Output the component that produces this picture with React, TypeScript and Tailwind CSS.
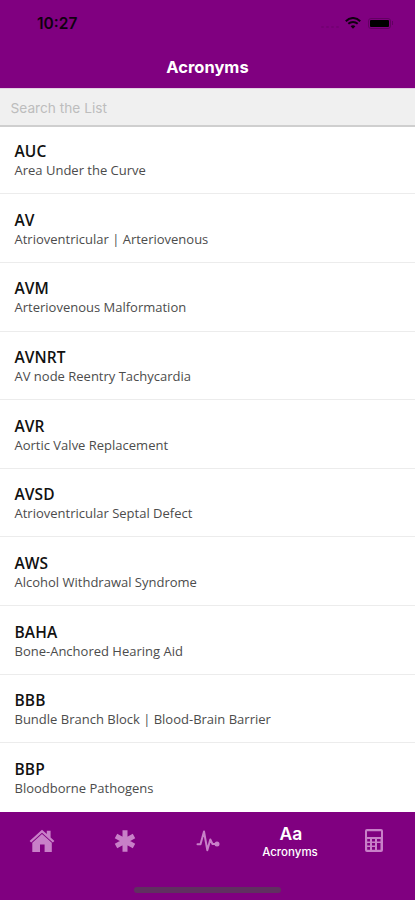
const rows = [
  ['AUC', 'Area Under the Curve'],
  ['AV', 'Atrioventricular | Arteriovenous'],
  ['AVM', 'Arteriovenous Malformation'],
  ['AVNRT', 'AV node Reentry Tachycardia'],
  ['AVR', 'Aortic Valve Replacement'],
  ['AVSD', 'Atrioventricular Septal Defect'],
  ['AWS', 'Alcohol Withdrawal Syndrome'],
  ['BAHA', 'Bone-Anchored Hearing Aid'],
  ['BBB', 'Bundle Branch Block | Blood-Brain Barrier'],
  ['BBP', 'Bloodborne Pathogens'],
];

function StatusBar() {
  return (
    <div className="flex h-[46px] items-center justify-between pr-[22px] pl-[37px] text-[#100010]">
      <span className="pt-[2px] font-['Inter',sans-serif] text-[15.500px] leading-none font-semibold tracking-[0px]">10:27</span>
      <div className="flex items-center">
        <div className="mt-[8px] mr-[6px] flex gap-[2px]">
          {[0, 1, 2, 3].map((i) => (
            <span key={i} className="h-[2px] w-[3px] rounded-full bg-[#740074]" />
          ))}
        </div>
        <svg className="h-[12px] w-[16px]" viewBox="0 0 16 12" fill="none" stroke="currentColor" strokeWidth="2">
          <path d="M.8 4.2C5-.1 11-.1 15.200 4.200M3.300 6.800C6 4.300 10 4.300 12.700 6.800" />
          <path d="M5.600 9.200C7 7.900 9 7.900 10.400 9.200L8 11.700Z" fill="currentColor" stroke="none" />
        </svg>
        <div className="ml-[7px] flex h-[11px] w-[23px] items-center rounded-[3px] border border-[#620062] p-px">
          <span className="h-[7px] w-full rounded-[1px] bg-black" />
        </div>
        <span className="ml-px h-[4px] w-px bg-[#620062]" />
      </div>
    </div>
  );
}

function HomeIcon() {
  return (
    <svg className="h-[24px] w-[26px]" viewBox="0 0 26 24" fill="currentColor">
      <path d="M13 .8 17.800 5V1.700H21.600V8.400L25.400 12 23.800 13.500 13 3.800 2.200 13.500.600 12Z" />
      <path d="M13 5.100 22.800 13.800V22.900H15.600V15.500H11V22.900H3.300V13.800Z" />
    </svg>
  );
}

function AsteriskIcon() {
  return (
    <svg className="h-[22px] w-[22px]" viewBox="0 0 22 22" stroke="currentColor" strokeWidth="5" strokeLinejoin="round">
      <path d="M11 .3V21.700M2 6 20 16M2 16 20 6" />
    </svg>
  );
}

function PulseIcon() {
  return (
    <svg className="h-[22px] w-[24px]" viewBox="0 0 24 22" fill="none" stroke="currentColor" strokeWidth="2" strokeLinecap="round" strokeLinejoin="round">
      <path d="M1.500 14.300H4.500L8 1.500 11.300 20.200 14.300 9.500 16.500 14H20" />
      <circle cx="21" cy="14" r="2.500" fill="currentColor" stroke="none" />
    </svg>
  );
}

function CalculatorIcon() {
  return (
    <svg className="h-[23px] w-[18px]" viewBox="0 0 18 23" fill="currentColor" fillRule="evenodd">
      <path d="M2 0H16Q18 0 18 2V21Q18 23 16 23H2Q0 23 0 21V2Q0 0 2 0ZM2 2.300V8H16V2.300ZM2.200 10V12.500H5V10ZM7 10V12.500H10V10ZM12 10V12.500H15.500V10ZM2.200 14V16.500H5V14ZM7 14V16.500H10V14ZM12 14V20.800H15.500V14ZM2.200 18V20.800H5V18ZM7 18V20.800H10V18Z" />
    </svg>
  );
}

export default function App() {
  return (
    <div className="flex h-[900px] w-[415px] flex-col overflow-hidden bg-white">
      <header className="h-[88px] shrink-0 bg-[#800080]">
        <StatusBar />
        <h1 className="text-center font-['Inter',sans-serif] text-[16.500px] leading-[42px] font-bold tracking-[0px] text-white">Acronyms</h1>
      </header>
      <div className="flex h-[39px] shrink-0 items-center border-t border-b-2 border-t-[#e4cfe4] border-b-[#cfcfcf] bg-[#f0f0f0] px-[10.500px]">
        <input
          className="w-full bg-transparent pt-px font-['Inter',sans-serif] text-[13.700px] leading-[20px] outline-none placeholder:text-[#bdbdbd]"
          placeholder="Search the List"
        />
      </div>
      <main className="h-[685px] shrink-0 overflow-hidden font-['Open_Sans',sans-serif]">
        {rows.map(([name, meaning]) => (
          <div key={name} className="h-[68.67px] border-b border-[#ececec] pt-[15.500px] pl-[14.500px] first:h-[67.200px] first:pt-[14px] last:border-b-0">
            <div className="text-[15.500px] leading-[20px] font-semibold tracking-[0.1px] text-[#111]">{name}</div>
            <div className="text-[13px] leading-[19.500px] text-[#4c4c4c]">{meaning}</div>
          </div>
        ))}
      </main>
      <footer className="relative flex h-[88px] shrink-0 bg-[#800080] text-[#c880c8]">
        <div className="flex h-[57px] flex-1 items-center justify-center pl-px"><HomeIcon /></div>
        <div className="flex h-[57px] flex-1 items-center justify-center pl-px"><AsteriskIcon /></div>
        <div className="flex h-[57px] flex-1 items-center justify-center pl-px"><PulseIcon /></div>
        <div className="flex flex-1 flex-col items-center pt-[12px] font-['Inter',sans-serif] text-white">
          <span className="pl-[2px] text-[17.500px] leading-[20px] font-semibold">Aa</span>
          <span className="text-[11.500px] leading-[16px] font-medium">Acronyms</span>
        </div>
        <div className="flex h-[57px] flex-1 items-center justify-center pl-[2px]"><CalculatorIcon /></div>
        <div className="absolute bottom-[7px] left-[134px] h-[6px] w-[147px] rounded-full bg-[#603060]" />
      </footer>
    </div>
  );
}
